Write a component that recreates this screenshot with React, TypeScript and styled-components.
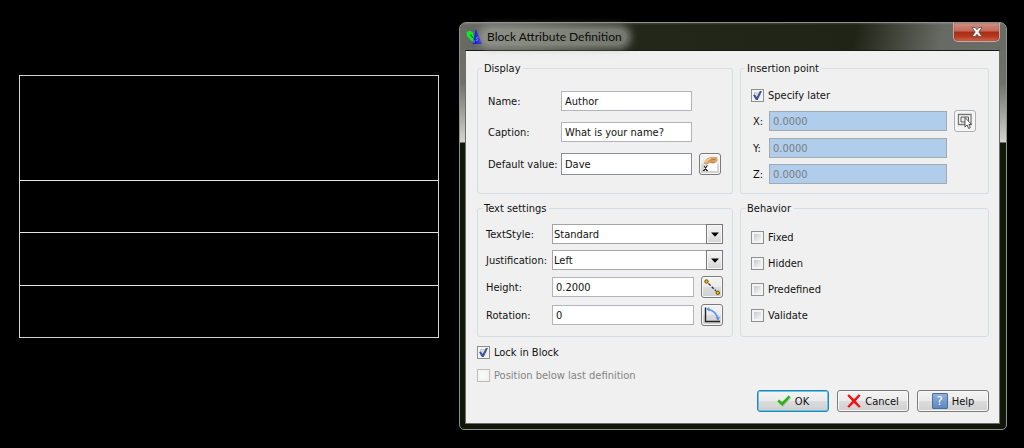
import React from "react";
import styled, { createGlobalStyle, css } from "styled-components";

const uiFont = `"DejaVu Sans Condensed", "DejaVu Sans", "Noto Sans", sans-serif`;

const GlobalStyle = createGlobalStyle`
  *, *::before, *::after { box-sizing: border-box; }
  body {
    margin: 0;
    background: #000;
    color: #111;
    font: 11px/15px ${uiFont};
  }
  button, input, select { font: inherit; color: inherit; margin: 0; }
`;

const Workspace = styled.main`
  display: grid;
  grid-template-columns: minmax(0, 420fr) minmax(0, 548fr);
  column-gap: 20px;
  align-items: start;
  min-height: 100vh;
  padding: 22px 17px 18px 19px;
`;

const TitleBlock = styled.div`
  display: grid;
  grid-template-rows: 105fr 52fr 53fr 51fr;
  height: 263px;
  margin-top: 53px;
  border: 1px solid #d4d4d4;
`;

const TitleBlockRow = styled.div`
  border-bottom: 1px solid #e4e4e4;
  &:last-child { border-bottom: 0; }
`;

const Dialog = styled.section`
  border: 1px solid #8f918c;
  border-radius: 7px 7px 5px 5px;
  padding: 0 6px 5px 5px;
  background: linear-gradient(to bottom, #6a6d66 0, #6f726b 60px, #a9aba6 95px, #d4d5d2 119px, #12170b 120px, #12170b 100%);
`;

const TitleBar = styled.header`
  display: flex;
  align-items: flex-start;
  height: 27px;
  margin: 0 -6px 0 -5px;
  padding: 0 6px;
  border-radius: 6px 6px 0 0;
  background:
    linear-gradient(to bottom, rgba(255, 255, 255, 0.14) 0, rgba(255, 255, 255, 0) 2px),
    linear-gradient(100deg, #696c65 0, #5c5f56 12%, #3c4034 24%, #22271a 33%, #1f2417 72%, #43473c 80%, #686b64 88%, #6a6d66 100%);
`;

const Title = styled.h1`
  flex: 1;
  display: flex;
  align-items: center;
  height: 27px;
  margin: 0;
  font: 400 12px/16px Lato, "Open Sans", sans-serif;
  color: #0c0c0c;
`;

const TitleText = styled.span`
  padding: 0 5px;
  border-radius: 9px;
  background: rgba(165, 168, 160, 0.6);
  box-shadow: 0 0 7px 4px rgba(165, 168, 160, 0.6);
`;

const CloseButton = styled.button`
  display: grid;
  place-items: center;
  width: 47px;
  height: 19px;
  padding: 0;
  border: 1px solid #c9a9a2;
  border-top: 0;
  border-radius: 0 0 5px 5px;
  background: linear-gradient(to bottom, #cf9184 0, #c26a59 45%, #a92c15 50%, #b43a20 75%, #d0664a 100%);
  box-shadow: inset 0 0 1px #3c0d05;
`;

const Client = styled.form`
  display: flex;
  flex-direction: column;
  margin: 0;
  padding: 10px 10px 11px 11px;
  border: 1px solid #6c6f69;
  border-top-color: #17191a;
  background: #f0f0f0;
`;

const Groups = styled.div`
  display: grid;
  grid-template-columns: minmax(0, 256fr) minmax(0, 249fr);
  gap: 7px;
`;

const Group = styled.fieldset<{ $pad: string; $gap: number }>`
  min-width: 0;
  margin: 0;
  padding: 0;
  border: 1px solid #d3dee5;
  border-radius: 3px;
  & > div {
    display: flex;
    flex-direction: column;
    gap: ${(p) => p.$gap}px;
    padding: ${(p) => p.$pad};
  }
`;

const Legend = styled.legend`
  margin-left: 4px;
  padding: 0 3px 0 2px;
`;

const FieldRow = styled.div<{ $label: number; $tail?: number }>`
  display: grid;
  grid-template-columns: ${(p) => p.$label}px minmax(0, 1fr) ${(p) => p.$tail ?? 29}px;
  align-items: center;
`;

const FieldLabel = styled.label<{ $inset?: boolean }>`
  white-space: nowrap;
  padding-left: ${(p) => (p.$inset ? 2 : 0)}px;
`;

const TextInput = styled.input<{ $tall?: boolean }>`
  width: 100%;
  min-width: 0;
  height: ${(p) => (p.$tall ? 22 : 20)}px;
  padding: 0 3px;
  border: 1px solid ${(p) => (p.$tall ? "#8a8e99" : "#b3b4ba")};
  border-radius: 0;
  background: #fff;
  &:disabled {
    border-color: #a5a9b0;
    background: #b0cdeb;
    color: #7a7d82;
  }
`;

const SelectBox = styled.div`
  display: grid;
  grid-template-columns: minmax(0, 1fr) 17px;
`;

const Select = styled.select`
  grid-area: 1 / 1 / 2 / 3;
  appearance: none;
  width: 100%;
  height: 20px;
  padding: 0 18px 0 1px;
  border: 1px solid #a3a5a9;
  border-radius: 0;
  background: #fff;
`;

const SelectArrow = styled.span`
  grid-area: 1 / 2 / 2 / 3;
  display: grid;
  place-items: center;
  height: 20px;
  border: 1px solid #77797c;
  background: linear-gradient(to bottom, #f2f2f2 0, #e8e8e8 50%, #d2d2d2 100%);
  box-shadow: inset 0 0 0 1px #f6f6f6;
  pointer-events: none;
`;

const buttonFace = css`
  border: 1px solid #7b7b7b;
  border-radius: 3px;
  background: linear-gradient(to bottom, #f3f3f3 0, #ebebeb 50%, #dcdcdc 51%, #cfcfcf 100%);
  box-shadow: inset 0 0 0 1px #f8f8f8;
`;

const ToolButton = styled.button<{ $quiet?: boolean }>`
  ${buttonFace}
  justify-self: end;
  display: grid;
  place-items: center;
  width: 22px;
  height: 22px;
  padding: 0;
  ${(p) => p.$quiet && css`
    border-color: #a9b0b6;
    background: #f3f3f3;
  `}
`;

const CheckLabel = styled.label<{ $muted?: boolean }>`
  display: flex;
  align-items: center;
  gap: 4px;
  height: 17px;
  color: ${(p) => (p.$muted ? "#838383" : "inherit")};
`;

const Tick = styled.input`
  appearance: none;
  display: grid;
  place-items: center;
  flex: none;
  width: 13px;
  height: 13px;
  border: 1px solid #8e8f8f;
  background: linear-gradient(135deg, #b4bac2 0, #dfe1e4 50%, #f6f6f6 85%);
  box-shadow: inset 0 0 0 2px #f4f4f4;
  &:checked::before {
    content: "";
    width: 9px;
    height: 9px;
    background: #3e549c;
    clip-path: polygon(0 45%, 20% 38%, 42% 66%, 76% 0, 100% 0, 52% 100%, 32% 100%);
  }
  &:disabled {
    border-color: #bcbcbc;
    background: #f8f8f8;
  }
`;

const Options = styled.div`
  display: flex;
  flex-direction: column;
  gap: 6px;
  margin-top: 7px;
`;

const Actions = styled.footer`
  display: flex;
  justify-content: flex-end;
  gap: 8px;
  margin-top: 6px;
`;

const ActionButton = styled.button<{ $primary?: boolean }>`
  ${buttonFace}
  display: flex;
  align-items: center;
  justify-content: center;
  gap: 4px;
  width: 72px;
  height: 22px;
  padding: 0;
  ${(p) => p.$primary && css`
    border-color: #2f83ab;
    box-shadow: inset 0 0 0 1px #5cc8ee;
  `}
`;

const AppIcon = () => (
  <svg width="16" height="16" viewBox="0 0 16 16" aria-hidden="true">
    <path d="M.5 3.500 4 1.500l3 2.200L9 14 4.500 11 1 7z" fill="#12e82a" />
    <path d="M4.500 5.500 7 9" stroke="#0a7a18" strokeWidth="1.200" />
    <path d="M9.800 0 16 15H6.500z" fill="#1414e4" />
    <path d="M11.800 8.500c-1.600-.4-2 .9-1 1.400s1.400 2-1 1.600M8 11v3" stroke="#5aa0c8" fill="none" />
  </svg>
);

const CloseIcon = () => (
  <svg width="12" height="10" viewBox="0 0 12 10" aria-hidden="true">
    <path d="M1 .5h3.200L6 2.700 7.800.5H11L7.800 5 11 9.500H7.800L6 7.300 4.200 9.500H1L4.200 5z" fill="#f6f6f6" stroke="#4e4a55" strokeWidth=".8" />
  </svg>
);

const DownIcon = () => (
  <svg width="8" height="5" viewBox="0 0 8 5" aria-hidden="true">
    <path d="M0 .5h8L4 4.800z" fill="#000" />
  </svg>
);

const FieldIcon = () => (
  <svg width="16" height="16" viewBox="0 0 16 16" aria-hidden="true">
    <path d="M4 6h11v9H2V8z" fill="#fdfdfd" />
    <path d="M1.500 7.200C3.500 3.400 6 1.200 8.800 1H14.500l1.200 2.500c-.6 2.400-2.300 4-4.700 4.100L8 6.800 4 9z" fill="#d9a368" />
    <path d="M3 6.500C5 4 7 2.500 9 2.300" stroke="#f0cfa4" strokeWidth="1.200" fill="none" />
    <path d="M8 4.400c2-1 4-1.200 5.500-.6M8.500 6.200l3 .3" stroke="#a97339" strokeWidth=".8" fill="none" />
    <path d="M2.200 9.800 4.800 14.500M5.400 9.300 2 14.500M.8 14.500h2M4 14.500h2" stroke="#222" strokeWidth="1.100" />
  </svg>
);

const PickIcon = () => (
  <svg width="16" height="16" viewBox="0 0 16 16" aria-hidden="true">
    <path d="M1.500 1.500h12.500v10h-12.500z" fill="#fff" stroke="#777" strokeWidth="1.300" />
    <path d="M4 4h7.500v5H4z" fill="#eee" stroke="#555" />
    <path d="M8 4.500v9.500l2.200-2 1.400 3.400 1.700-.7-1.400-3.200h2.700z" fill="#fff" stroke="#444" strokeWidth=".9" />
  </svg>
);

const DistanceIcon = () => (
  <svg width="18" height="18" viewBox="0 0 18 18" aria-hidden="true">
    <path d="M5.500 5.500 13 13" stroke="#333" strokeWidth="1.400" strokeDasharray="3 1.500" />
    <circle cx="3.500" cy="3.500" r="1.700" fill="#f5c400" stroke="#5d4a00" />
    <circle cx="14.800" cy="14.800" r="1.700" fill="#f5c400" stroke="#5d4a00" />
  </svg>
);

const AngleIcon = () => (
  <svg width="18" height="18" viewBox="0 0 18 18" aria-hidden="true">
    <path d="M2.500 1.500v14H17" fill="none" stroke="#222" strokeWidth="1.400" />
    <path d="M4.500 3.200c5.500.8 9 4.500 10.300 9.300" fill="none" stroke="#5b94f0" strokeWidth="1.600" />
    <path d="M3 2.800 6.500 1.200v4.300zM15.200 15l-2.500-3.300 4.200-.8z" fill="#5b94f0" />
  </svg>
);

const OkIcon = () => (
  <svg width="14" height="12" viewBox="0 0 14 12" aria-hidden="true">
    <path d="M2 8.200 6 12 14 3l-1-1z" fill="#b9bdb4" />
    <path d="M.3 6.300 2.300 4.600 5 7.200 11.600.4 13.400 2 5.200 10.900z" fill="#22b80c" />
  </svg>
);

const CancelIcon = () => (
  <svg width="14" height="14" viewBox="0 0 14 14" aria-hidden="true">
    <path d="M.3 1.800 2 .3 7 5 11.800.3 13.600 1.400 8.800 6.900 13.700 12.400 12 13.700 7 8.900 2 13.700.3 12.600 5.200 6.900z" fill="#f01414" />
  </svg>
);

const HelpBadge = styled.span`
  display: grid;
  place-items: center;
  width: 16px;
  height: 16px;
  border: 1px solid #4a6f9f;
  border-radius: 1px;
  background: linear-gradient(to bottom, #8fb0da, #5f88bd);
  color: #fff;
  font: 400 12px/14px "DejaVu Sans", sans-serif;
`;

function TextField({ id, label, value, labelWidth, tall, inset, disabled, children }: {
  id: string; label: string; value: string; labelWidth: number;
  tall?: boolean; inset?: boolean; disabled?: boolean; children?: React.ReactNode;
}) {
  return (
    <FieldRow $label={labelWidth}>
      <FieldLabel htmlFor={id} $inset={inset}>{label}</FieldLabel>
      <TextInput id={id} type="text" defaultValue={value} $tall={tall} disabled={disabled} />
      {children}
    </FieldRow>
  );
}

function SelectField({ id, label, options }: { id: string; label: string; options: string[] }) {
  return (
    <FieldRow $label={66} $tail={0}>
      <FieldLabel htmlFor={id}>{label}</FieldLabel>
      <SelectBox>
        <Select id={id} defaultValue={options[0]}>
          {options.map((o) => <option key={o}>{o}</option>)}
        </Select>
        <SelectArrow><DownIcon /></SelectArrow>
      </SelectBox>
    </FieldRow>
  );
}

function Check({ label, checked, disabled }: { label: string; checked?: boolean; disabled?: boolean }) {
  return (
    <CheckLabel $muted={disabled}>
      <Tick type="checkbox" defaultChecked={checked} disabled={disabled} />
      {label}
    </CheckLabel>
  );
}

export default function App() {
  return (
    <>
      <GlobalStyle />
      <Workspace>
        <TitleBlock>
          <TitleBlockRow />
          <TitleBlockRow />
          <TitleBlockRow />
          <TitleBlockRow />
        </TitleBlock>
        <Dialog role="dialog" aria-labelledby="dialog-title">
          <TitleBar>
            <Title id="dialog-title">
              <AppIcon />
              <TitleText>Block Attribute Definition</TitleText>
            </Title>
            <CloseButton type="button" aria-label="Close"><CloseIcon /></CloseButton>
          </TitleBar>
          <Client onSubmit={(e) => e.preventDefault()}>
            <Groups>
              <Group $pad="15px 11px 18px 10px" $gap={11}>
                <Legend>Display</Legend>
                <div>
                  <TextField id="name" label="Name:" value="Author" labelWidth={73} />
                  <TextField id="caption" label="Caption:" value="What is your name?" labelWidth={73} />
                  <TextField id="default" label="Default value:" value="Dave" labelWidth={73} tall>
                    <ToolButton type="button" aria-label="Insert field"><FieldIcon /></ToolButton>
                  </TextField>
                </div>
              </Group>
              <Group $pad="11px 12px 9px 10px" $gap={6}>
                <Legend>Insertion point</Legend>
                <div>
                  <Check label="Specify later" checked />
                  <TextField id="x" label="X:" value="0.0000" labelWidth={18} inset disabled>
                    <ToolButton type="button" aria-label="Pick point" $quiet><PickIcon /></ToolButton>
                  </TextField>
                  <TextField id="y" label="Y:" value="0.0000" labelWidth={18} inset disabled />
                  <TextField id="z" label="Z:" value="0.0000" labelWidth={18} inset disabled />
                </div>
              </Group>
              <Group $pad="8px 9px 10px 8px" $gap={6}>
                <Legend>Text settings</Legend>
                <div>
                  <SelectField id="style" label="TextStyle:" options={["Standard"]} />
                  <SelectField id="justify" label="Justification:" options={["Left", "Center", "Right"]} />
                  <TextField id="height" label="Height:" value="0.2000" labelWidth={66}>
                    <ToolButton type="button" aria-label="Pick height"><DistanceIcon /></ToolButton>
                  </TextField>
                  <TextField id="rotation" label="Rotation:" value="0" labelWidth={66}>
                    <ToolButton type="button" aria-label="Pick rotation"><AngleIcon /></ToolButton>
                  </TextField>
                </div>
              </Group>
              <Group $pad="13px 10px 12px 10px" $gap={9}>
                <Legend>Behavior</Legend>
                <div>
                  <Check label="Fixed" />
                  <Check label="Hidden" />
                  <Check label="Predefined" />
                  <Check label="Validate" />
                </div>
              </Group>
            </Groups>
            <Options>
              <Check label="Lock in Block" checked />
              <Check label="Position below last definition" disabled />
            </Options>
            <Actions>
              <ActionButton type="submit" $primary><OkIcon />OK</ActionButton>
              <ActionButton type="button"><CancelIcon />Cancel</ActionButton>
              <ActionButton type="button"><HelpBadge aria-hidden="true">?</HelpBadge>Help</ActionButton>
            </Actions>
          </Client>
        </Dialog>
      </Workspace>
    </>
  );
}
